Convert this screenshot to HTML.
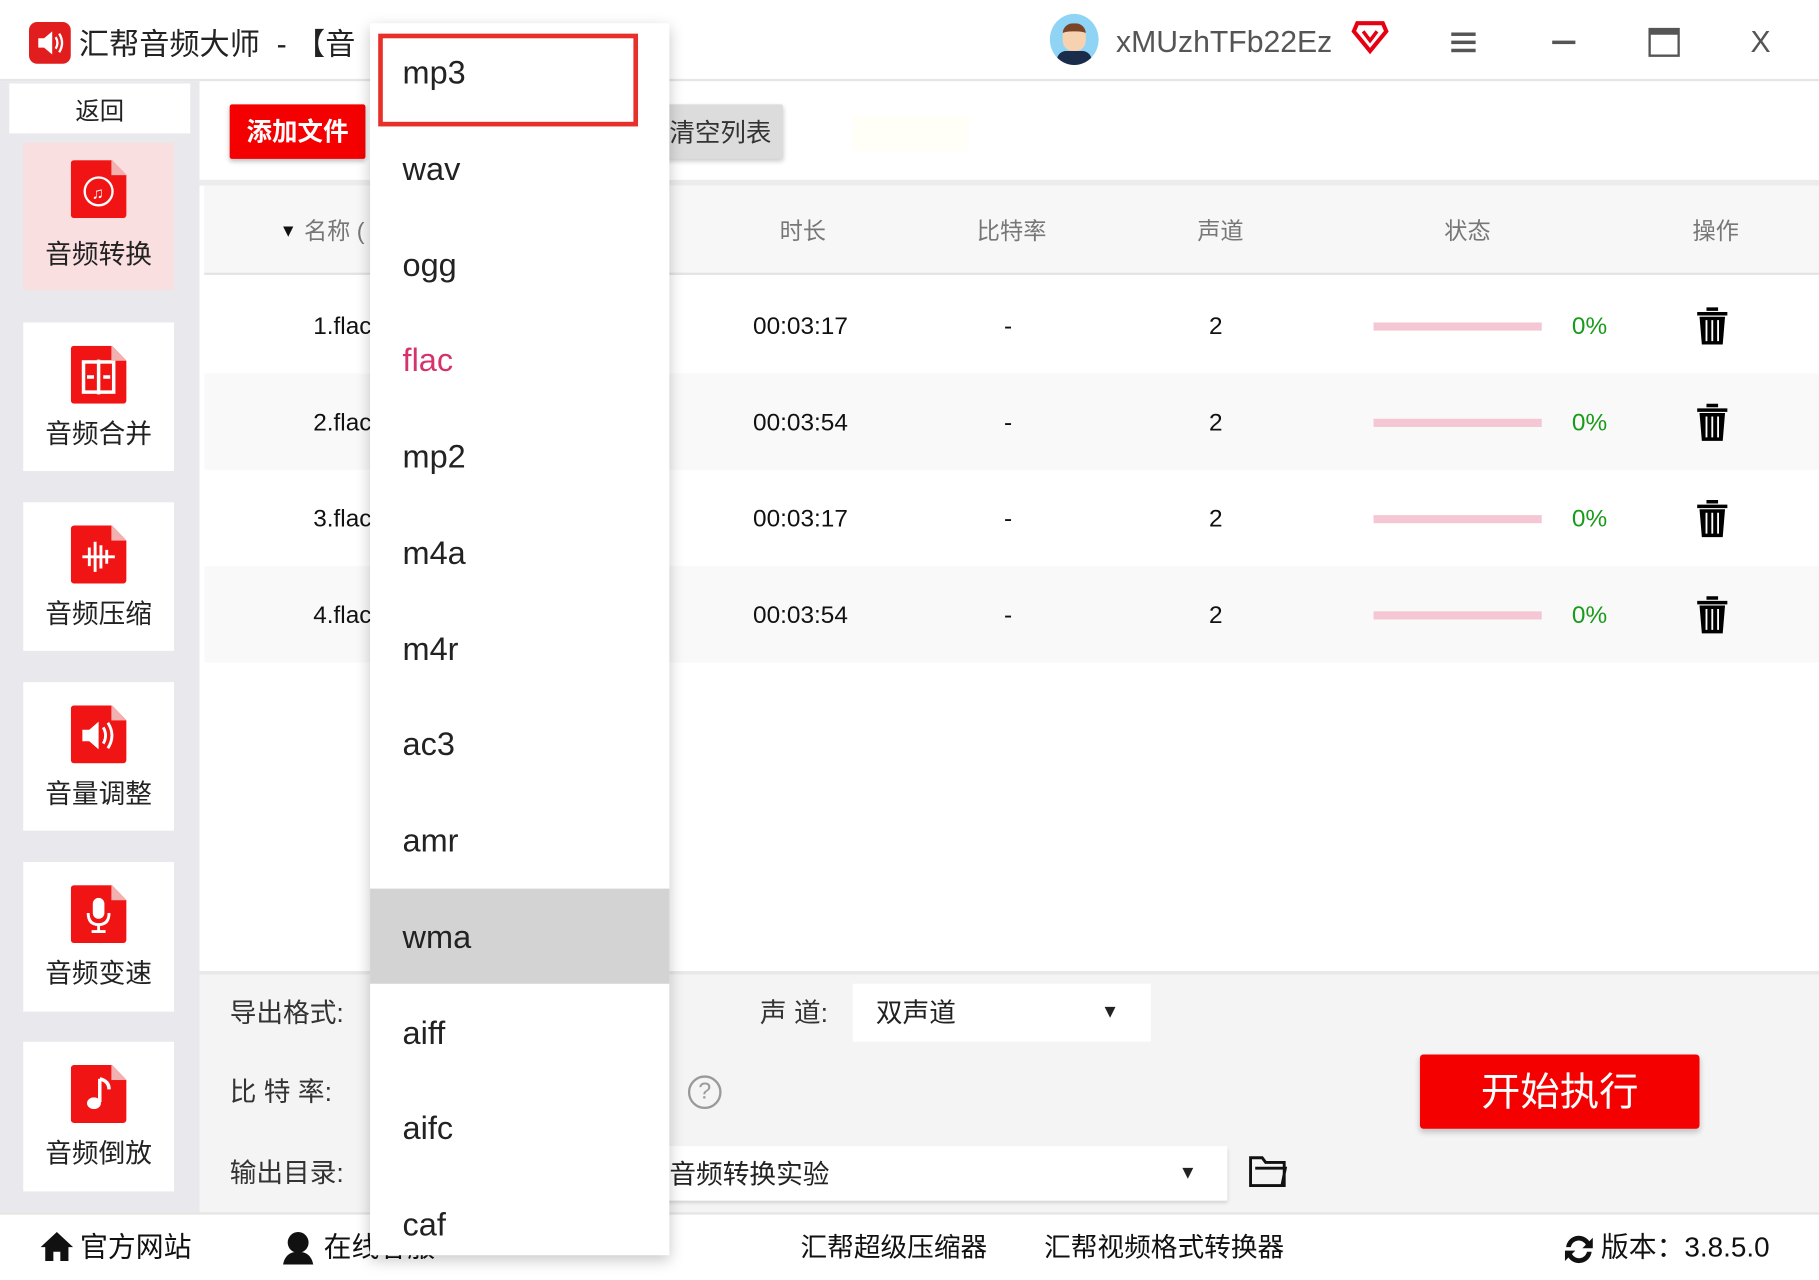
<!DOCTYPE html>
<html><head><meta charset="utf-8"><style>
*{margin:0;padding:0;box-sizing:border-box}
html,body{width:1819px;height:1279px;overflow:hidden;background:#fff}
#w{position:absolute;left:0;top:0;width:1568px;height:1103px;transform:scale(1.16008);transform-origin:0 0;font-family:"Liberation Sans","Noto Sans CJK SC",sans-serif;color:#222}
.a{position:absolute}
.t{position:absolute;white-space:nowrap;line-height:1}
.side{left:20px;width:130px;background:#fff}
.ic{position:absolute;left:41px;width:48px;height:50px;background:#f01414;border-radius:3px;clip-path:polygon(0 0,74% 0,100% 26%,100% 100%,0 100%)}
.ic:after{content:"";position:absolute;right:0;top:0;width:13px;height:13px;background:#f3b0b0}
.ic svg{position:absolute;left:0;top:0}
.sl{position:absolute;left:0;width:130px;text-align:center;font-size:23px;color:#222}
.hd{font-size:20px;color:#777;transform:translateX(-50%)}
.c{transform:translateX(-50%);font-size:21px;color:#111}
.bar{position:absolute;left:1184px;width:145px;height:7px;background:#f5c6d4}
.pct{position:absolute;left:1355px;font-size:21px;color:#1a9a1a;line-height:1}
.dd{position:absolute;left:347px;font-size:28px;color:#222;line-height:1}
</style></head><body><div id="w">
<div class="a" style="left:0;top:0;width:1568px;height:70px;background:#fff;border-bottom:2px solid #e6e6e6"></div>
<div class="a" style="left:25px;top:19px;width:36px;height:36px;background:#e21d1d;border-radius:7px"></div>
<svg class="a" style="left:25px;top:19px" width="36" height="36" viewBox="0 0 36 36"><path d="M8 14h5l7-6v20l-7-6H8z" fill="#fff"/><path d="M23 13q3 5 0 10M26 10q5 8 0 16" stroke="#fff" stroke-width="2" fill="none"/></svg>
<div class="t" style="left:68px;top:25px;font-size:26px;color:#222">汇帮音频大师 &nbsp;- 【音</div>
<div class="a" style="left:905px;top:12px;width:42px;height:44px;border-radius:50%;background:#8fd3f5;overflow:hidden"><div class="a" style="left:11px;top:8px;width:20px;height:24px;border-radius:9px;background:#f6d2b0;border-top:7px solid #7a4426"></div><div class="a" style="left:6px;top:32px;width:30px;height:14px;border-radius:8px 8px 0 0;background:#1b2b4a"></div></div>
<div class="t" style="left:962px;top:23px;font-size:26px;color:#555">xMUzhTFb22Ez</div>
<svg class="a" style="left:1165px;top:17px" width="32" height="30" viewBox="0 0 32 30"><path d="M5 3h22l3 7-14 17L2 10z" fill="none" stroke="#e60012" stroke-width="3.5"/><path d="M10 10l6 8 6-8" fill="none" stroke="#e60012" stroke-width="3"/></svg>
<div class="a" style="left:1251px;top:28px;width:21px;height:3px;background:#555;box-shadow:0 7px 0 #555,0 14px 0 #555"></div>
<div class="a" style="left:1338px;top:35px;width:20px;height:3px;background:#555"></div>
<div class="a" style="left:1421px;top:24px;width:27px;height:25px;border:2px solid #555;border-top:6px solid #555"></div>
<div class="t" style="left:1509px;top:23px;font-size:26px;color:#555">X</div>
<div class="a" style="left:0;top:70px;width:172px;height:975px;background:#e9e9ed"></div>
<div class="a" style="left:8px;top:72px;width:156px;height:43px;background:#fff"></div>
<div class="t" style="left:8px;top:86px;width:156px;text-align:center;font-size:21px">返回</div>
<div class="a side" style="top:123px;height:127px;background:#f9dfe0"><div class="ic" style="top:15px"><svg width="48" height="50"><circle cx="24" cy="27" r="12" fill="none" stroke="#fff" stroke-width="2"/><text x="18" y="33" font-size="14" fill="#fff">♫</text></svg></div><div class="sl" style="top:77px">音频转换</div></div>
<div class="a side" style="top:278px;height:128px"><div class="ic" style="top:20px"><svg width="48" height="50"><rect x="11" y="14" width="26" height="26" fill="none" stroke="#fff" stroke-width="3"/><path d="M24 12v30M14 27h6M28 27h6" stroke="#fff" stroke-width="3"/></svg></div><div class="sl" style="top:77px">音频合并</div></div>
<div class="a side" style="top:433px;height:128px"><div class="ic" style="top:20px"><svg width="48" height="50"><path d="M10 27h28M16 19v16M21 14v26M26 17v20M31 21v12" stroke="#fff" stroke-width="2.5"/></svg></div><div class="sl" style="top:77px">音频压缩</div></div>
<div class="a side" style="top:588px;height:128px"><div class="ic" style="top:20px"><svg width="48" height="50"><path d="M10 21h6l8-7v24l-8-7h-6z" fill="#fff"/><path d="M28 19q4 7 0 14M32 15q7 11 0 22" stroke="#fff" stroke-width="2.5" fill="none"/></svg></div><div class="sl" style="top:77px">音量调整</div></div>
<div class="a side" style="top:743px;height:129px"><div class="ic" style="top:20px"><svg width="48" height="50"><rect x="19" y="11" width="10" height="18" rx="5" fill="#fff"/><path d="M15 24q0 10 9 10t9-10M24 34v6M18 40h12" stroke="#fff" stroke-width="2.5" fill="none"/></svg></div><div class="sl" style="top:77px">音频变速</div></div>
<div class="a side" style="top:898px;height:129px"><div class="ic" style="top:20px"><svg width="48" height="50"><path d="M25 12v20" stroke="#fff" stroke-width="3"/><ellipse cx="20" cy="33" rx="6" ry="5" fill="#fff"/><path d="M25 12q8 2 8 9" stroke="#fff" stroke-width="3" fill="none"/></svg></div><div class="sl" style="top:77px">音频倒放</div></div>
<div class="a" style="left:198px;top:90px;width:117px;height:47px;background:#f50000;border-radius:2px;box-shadow:0 2px 4px rgba(0,0,0,.25)"></div>
<div class="t" style="left:198px;top:103px;width:117px;text-align:center;font-size:22px;font-weight:bold;color:#fff">添加文件</div>
<div class="a" style="left:540px;top:90px;width:135px;height:47px;background:#dcdcdc;border-radius:2px;box-shadow:0 2px 4px rgba(0,0,0,.2)"></div>
<div class="t" style="left:577px;top:104px;font-size:22px;color:#333">清空列表</div>
<div class="a" style="left:735px;top:100px;width:100px;height:30px;background:#fffef7"></div>
<div class="a" style="left:172px;top:155px;width:1396px;height:5px;background:#ececec"></div>
<div class="a" style="left:176px;top:160px;width:1392px;height:77px;background:#f7f7f7;border-bottom:2px solid #e4e4e4"></div>
<div class="t" style="left:241px;top:192px;font-size:15px;color:#111">▼</div>
<div class="t" style="left:262px;top:190px;font-size:20px;color:#777">名称 (</div>
<div class="t hd" style="left:692px;top:190px">时长</div>
<div class="t hd" style="left:872px;top:190px">比特率</div>
<div class="t hd" style="left:1052px;top:190px">声道</div>
<div class="t hd" style="left:1265px;top:190px">状态</div>
<div class="t hd" style="left:1479px;top:190px">操作</div>
<div class="a" style="left:176px;top:322px;width:1392px;height:83px;background:#f9f9f9"></div>
<div class="a" style="left:176px;top:488px;width:1392px;height:83px;background:#f9f9f9"></div>
<div class="a" style="left:172px;top:237px;width:4px;height:600px;background:#fff"></div>
<div class="t" style="left:270px;top:271px;font-size:21px;color:#111">1.flac</div>
<div class="t" style="left:270px;top:354px;font-size:21px;color:#111">2.flac</div>
<div class="t" style="left:270px;top:437px;font-size:21px;color:#111">3.flac</div>
<div class="t" style="left:270px;top:520px;font-size:21px;color:#111">4.flac</div>
<div class="t c" style="left:690px;top:271px">00:03:17</div><div class="t c" style="left:869px;top:271px">-</div><div class="t c" style="left:1048px;top:271px">2</div>
<div class="t c" style="left:690px;top:354px">00:03:54</div><div class="t c" style="left:869px;top:354px">-</div><div class="t c" style="left:1048px;top:354px">2</div>
<div class="t c" style="left:690px;top:437px">00:03:17</div><div class="t c" style="left:869px;top:437px">-</div><div class="t c" style="left:1048px;top:437px">2</div>
<div class="t c" style="left:690px;top:520px">00:03:54</div><div class="t c" style="left:869px;top:520px">-</div><div class="t c" style="left:1048px;top:520px">2</div>
<div class="bar" style="top:278px"></div><div class="pct" style="top:271px">0%</div>
<div class="bar" style="top:361px"></div><div class="pct" style="top:354px">0%</div>
<div class="bar" style="top:444px"></div><div class="pct" style="top:437px">0%</div>
<div class="bar" style="top:527px"></div><div class="pct" style="top:520px">0%</div>
<svg class="a" style="left:1461px;top:264px" width="30" height="34" viewBox="0 0 30 34"><path d="M10 4V1h10v3M2 5h26v3H2zM4 9h22l-2 24H6z" fill="#000"/><path d="M10 12v18M15 12v18M20 12v18" stroke="#fff" stroke-width="1.6"/></svg>
<svg class="a" style="left:1461px;top:347px" width="30" height="34" viewBox="0 0 30 34"><path d="M10 4V1h10v3M2 5h26v3H2zM4 9h22l-2 24H6z" fill="#000"/><path d="M10 12v18M15 12v18M20 12v18" stroke="#fff" stroke-width="1.6"/></svg>
<svg class="a" style="left:1461px;top:430px" width="30" height="34" viewBox="0 0 30 34"><path d="M10 4V1h10v3M2 5h26v3H2zM4 9h22l-2 24H6z" fill="#000"/><path d="M10 12v18M15 12v18M20 12v18" stroke="#fff" stroke-width="1.6"/></svg>
<svg class="a" style="left:1461px;top:513px" width="30" height="34" viewBox="0 0 30 34"><path d="M10 4V1h10v3M2 5h26v3H2zM4 9h22l-2 24H6z" fill="#000"/><path d="M10 12v18M15 12v18M20 12v18" stroke="#fff" stroke-width="1.6"/></svg>
<div class="a" style="left:172px;top:837px;width:1396px;height:208px;background:#f4f4f4;border-top:3px solid #e8e8e8"></div>
<div class="t" style="left:198px;top:862px;font-size:23px;color:#333">导出格式:</div>
<div class="t" style="left:198px;top:930px;font-size:23px;color:#333">比 特 率:</div>
<div class="t" style="left:198px;top:1000px;font-size:23px;color:#333">输出目录:</div>
<div class="t" style="left:655px;top:862px;font-size:23px;color:#333">声 道:</div>
<div class="a" style="left:735px;top:848px;width:257px;height:50px;background:#fff"></div>
<div class="t" style="left:755px;top:862px;font-size:23px;color:#222">双声道</div>
<div class="t" style="left:949px;top:865px;font-size:16px;color:#222">▼</div>
<div class="a" style="left:593px;top:927px;width:29px;height:29px;border:2px solid #999;border-radius:50%;text-align:center;font-size:20px;line-height:25px;color:#999">?</div>
<div class="a" style="left:560px;top:988px;width:498px;height:47px;background:#fff;box-shadow:0 2px 3px rgba(0,0,0,.15)"></div>
<div class="t" style="left:577px;top:1001px;font-size:23px;color:#222">音频转换实验</div>
<div class="t" style="left:1016px;top:1004px;font-size:16px;color:#222">▼</div>
<svg class="a" style="left:1076px;top:995px" width="34" height="30" viewBox="0 0 34 30"><path d="M2 3h10l3 4h16v20H2z M6 12h26l-3 15" fill="none" stroke="#111" stroke-width="2.5"/></svg>
<div class="a" style="left:1224px;top:909px;width:241px;height:64px;background:#f50000;border-radius:3px;box-shadow:0 3px 5px rgba(0,0,0,.2)"></div>
<div class="t" style="left:1224px;top:925px;width:241px;text-align:center;font-size:34px;color:#fff">开始执行</div>
<div class="a" style="left:0;top:1045px;width:1568px;height:58px;background:#fff;border-top:2px solid #e4e4e4"></div>
<svg class="a" style="left:34px;top:1060px" width="30" height="28" viewBox="0 0 30 28"><path d="M15 2L1 15h4v12h7v-8h6v8h7V15h4z" fill="#111"/></svg>
<div class="t" style="left:69px;top:1064px;font-size:24px;color:#111">官方网站</div>
<svg class="a" style="left:242px;top:1060px" width="30" height="30" viewBox="0 0 30 30"><circle cx="15" cy="11" r="9" fill="#111"/><path d="M2 30q2-11 13-11t13 11z" fill="#111"/></svg>
<div class="t" style="left:279px;top:1064px;font-size:24px;color:#111">在线客服</div>
<div class="t" style="left:690px;top:1064px;font-size:23px;color:#111">汇帮超级压缩器</div>
<div class="t" style="left:900px;top:1064px;font-size:23px;color:#111">汇帮视频格式转换器</div>
<svg class="a" style="left:1346px;top:1062px" width="30" height="30" viewBox="0 0 30 30"><path d="M4 13A11 11 0 0 1 24 8l3-3v9h-9l3-3A7 7 0 0 0 8 13z M26 17A11 11 0 0 1 6 22l-3 3v-9h9l-3 3a7 7 0 0 0 13-2z" fill="#111"/></svg>
<div class="t" style="left:1380px;top:1064px;font-size:24px;color:#111">版本：3.8.5.0</div>
<div class="a" style="left:319px;top:20px;width:258px;height:1062px;background:#fff;box-shadow:0 4px 12px rgba(0,0,0,.22)"></div>
<div class="a" style="left:319px;top:766px;width:258px;height:82px;background:#d3d3d3"></div>
<div class="a" style="left:326px;top:29px;width:224px;height:80px;border:4px solid #e8302a"></div>
<div class="dd" style="top:49px">mp3</div>
<div class="dd" style="top:132px">wav</div>
<div class="dd" style="top:215px">ogg</div>
<div class="dd" style="top:297px;color:#d6336c">flac</div>
<div class="dd" style="top:380px">mp2</div>
<div class="dd" style="top:463px">m4a</div>
<div class="dd" style="top:546px">m4r</div>
<div class="dd" style="top:628px">ac3</div>
<div class="dd" style="top:711px">amr</div>
<div class="dd" style="top:794px">wma</div>
<div class="dd" style="top:877px">aiff</div>
<div class="dd" style="top:959px">aifc</div>
<div class="dd" style="top:1042px">caf</div>
</div></body></html>
